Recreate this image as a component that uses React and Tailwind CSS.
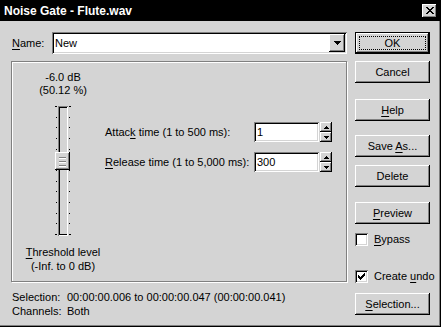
import React from 'react';

// Win9x style helpers
const raised = 'shadow-[inset_-1px_-1px_#000,inset_1px_1px_#fff,inset_-2px_-2px_#808080]';
const sunken = 'shadow-[inset_1px_1px_#808080,inset_-1px_-1px_#fff,inset_2px_2px_#000,inset_-2px_-2px_#d4d4d4]';

const U = ({ children }) => <span className="underline underline-offset-[2px]">{children}</span>;

const Button = ({ children, isDefault = false, className = '' }) => (
  <div
    className={`h-[22px] w-full flex bg-[#d4d4d4] ${
      isDefault ? 'border border-black shadow-[inset_-1px_-1px_#000,inset_1px_1px_#fff,inset_-2px_-2px_#808080]' : raised
    } ${className}`}
  >
    <div
      className={`flex-1 flex items-center justify-center ${
        isDefault ? 'm-[3px] border border-dotted border-black' : ''
      }`}
    >
      <span className="whitespace-pre">{children}</span>
    </div>
  </div>
);

const Checkbox = ({ checked, children, className = '' }) => (
  <div className={`flex items-center h-[13px] whitespace-nowrap ${className}`}>
    <div className={`w-[13px] h-[13px] shrink-0 bg-white flex items-center justify-center ${sunken}`}>
      {checked && (
        <svg width="7" height="7" viewBox="0 0 7 7">
          <path d="M0 2h1v1h1v1h1V3h1V2h1V1h1V0h1v3H6v1H5v1H4v1H3v1H2V6H1V5H0z" fill="#000" />
        </svg>
      )}
    </div>
    <span className="ml-[6px] leading-[13px]">{children}</span>
  </div>
);

const SpinArrow = ({ up }) => (
  <svg width="5" height="3" viewBox="0 0 5 3">
    <path d={up ? 'M2 0h1v1h1v1h1v1H0V2h1V1h1z' : 'M0 0h5v1H4v1H3v1H2V2H1V1H0z'} fill="#000" />
  </svg>
);

const NumberField = ({ label, value }) => (
  <div className="flex items-center h-[20px]">
    <span className="w-[149px]">{label}</span>
    <div className={`w-[65px] h-[20px] bg-white flex items-center pl-[3px] ${sunken}`}>{value}</div>
    <div className="ml-[1px] w-[12px] h-[20px] flex flex-col">
      <div className={`h-[10px] flex items-center justify-center bg-[#d4d4d4] ${raised}`}>
        <SpinArrow up />
      </div>
      <div className={`h-[10px] flex items-center justify-center bg-[#d4d4d4] ${raised}`}>
        <SpinArrow />
      </div>
    </div>
  </div>
);

const Slider = () => {
  const ticks = Array.from({ length: 13 }, (_, i) => Math.round((i * 128) / 12));
  return (
    <svg width="16" height="130" viewBox="0 0 16 130" className="mx-auto block" shapeRendering="crispEdges">
      {ticks.map((y, i) => {
        const edge = i === 0 || i === 12;
        return (
          <g key={i} fill="#000">
            <rect x={edge ? 0 : 1} y={y} width={edge ? 2 : 1} height="1" />
            <rect x="14" y={y} width={edge ? 2 : 1} height="1" />
          </g>
        );
      })}
      {/* track */}
      <rect x="3" y="0" width="10" height="130" fill="#808080" />
      <rect x="4" y="1" width="8" height="128" fill="#000" />
      <rect x="5" y="2" width="7" height="126" fill="#d4d4d4" />
      <rect x="12" y="1" width="1" height="129" fill="#fff" />
      <rect x="4" y="129" width="9" height="1" fill="#fff" />
      {/* thumb */}
      <rect x="0" y="46" width="15" height="18" fill="#000" />
      <rect x="0" y="46" width="14" height="17" fill="#fff" />
      <rect x="1" y="47" width="13" height="16" fill="#808080" />
      <rect x="1" y="47" width="12" height="15" fill="#d4d4d4" />
      <rect x="4" y="51" width="7" height="1" fill="#808080" />
      <rect x="4" y="55" width="7" height="1" fill="#808080" />
      <rect x="4" y="59" width="7" height="1" fill="#808080" />
      <rect x="4" y="52" width="7" height="1" fill="#fff" />
      <rect x="4" y="56" width="7" height="1" fill="#fff" />
      <rect x="4" y="60" width="7" height="1" fill="#fff" />
    </svg>
  );
};

export default function App() {
  return (
    <div className="w-[441px] h-[327px] bg-[#d4d4d4] flex flex-col text-[11px] text-black font-['Liberation_Sans',Arial,sans-serif] shadow-[inset_-1px_-1px_#000,inset_-2px_-2px_#808080]">
      {/* Title bar */}
      <div className="h-[21px] bg-black flex items-center justify-between pl-[4px] pr-[4px] shrink-0">
        <span className="text-white font-bold text-[12px] leading-none">Noise Gate - Flute.wav</span>
        <div className={`w-[15px] h-[14px] bg-[#d4d4d4] flex items-center justify-center ${raised}`}>
          <svg width="8" height="7" viewBox="0 0 8 7" shapeRendering="crispEdges">
            <path d="M0 0h2v1h1v1h2V1h1V0h2v1H7v1H6v1H5v1h1v1h1v1h1v1H6V6H5V5H3v1H2v1H0V6h1V5h1V4h1V3H2V2H1V1H0z" fill="#000" />
          </svg>
        </div>
      </div>

      {/* Body */}
      <div className="flex-1 flex pl-[11px] pr-[11px] pt-[11px] gap-[8px]">
        {/* Left column */}
        <div className="w-[336px] flex flex-col">
          <div className="h-[22px] flex items-center">
            <span className="w-[41px] pl-[1px]">
              <U>N</U>ame:
            </span>
            <div className={`flex-1 h-[22px] bg-white flex items-center pl-[3px] pr-[2px] ${sunken}`}>
              <span className="flex-1">New</span>
              <div className={`w-[16px] h-[18px] bg-[#d4d4d4] flex items-center justify-center ${raised}`}>
                <svg width="7" height="4" viewBox="0 0 7 4">
                  <path d="M0 0h7v1H6v1H5v1H4v1H3V3H2V2H1V1H0z" fill="#000" />
                </svg>
              </div>
            </div>
          </div>

          {/* Group box */}
          <div className="mt-[7px] h-[221px] border border-[#808080] shadow-[inset_1px_1px_#fff,1px_1px_#fff] flex">
            <div className="ml-[9px] w-[84px] flex flex-col items-center pt-[9px]">
              <div className="leading-[13px] text-center">
                <div>-6.0 dB</div>
                <div>(50.12 %)</div>
              </div>
              <div className="mt-[9px]">
                <Slider />
              </div>
              <div className="mt-[9px] leading-[14px] text-center">
                <div>
                  <U>T</U>hreshold level
                </div>
                <div>(-Inf. to 0 dB)</div>
              </div>
            </div>
            <div className="flex flex-col pt-[60px]">
              <NumberField
                label={
                  <>
                    Attac<U>k</U> time (1 to 500 ms):
                  </>
                }
                value="1"
              />
              <div className="mt-[10px]">
                <NumberField
                  label={
                    <>
                      <U>R</U>elease time (1 to 5,000 ms):
                    </>
                  }
                  value="300"
                />
              </div>
            </div>
          </div>

          {/* Status */}
          <div className="mt-[8px] grid grid-cols-[55px_1fr] leading-[14px] pl-[1px]">
            <span>Selection:</span>
            <span>00:00:00.006 to 00:00:00.047 (00:00:00.041)</span>
            <span>Channels:</span>
            <span>Both</span>
          </div>
        </div>

        {/* Right column */}
        <div className="w-[75px] flex flex-col">
          <Button isDefault>OK</Button>
          <Button className="mt-[7px]">Cancel</Button>
          <Button className="mt-[16px]">
            <U>H</U>elp
          </Button>
          <Button className="mt-[14px]">
            Save <U>A</U>s...
          </Button>
          <Button className="mt-[8px]">Delete</Button>
          <Button className="mt-[15px]">
            <U>P</U>review
          </Button>
          <Checkbox className="mt-[9px]">
            <U>B</U>ypass
          </Checkbox>
          <Checkbox checked className="mt-[24px]">
            Create <U>u</U>ndo
          </Checkbox>
          <Button className="mt-[10px]">
            <U>S</U>election...
          </Button>
        </div>
      </div>
    </div>
  );
}
